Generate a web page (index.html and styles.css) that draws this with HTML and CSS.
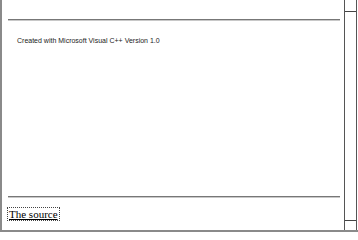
FILE: index.html
```html
<!DOCTYPE html>
<html>
<head>
<meta charset="utf-8">
<link rel="stylesheet" href="styles.css">
</head>
<body>
<div class="frame">
  <div class="page">
    <div class="top-space"></div>
    <hr class="rule">
    <p class="credit">Created with Microsoft Visual C++ Version 1.0</p>
    <div class="spacer"></div>
    <hr class="rule">
    <div class="links"><a class="source" href="#">The source</a></div>
  </div>
  <div class="scrollbar">
    <div class="sb-btn"></div>
    <div class="sb-track"></div>
    <div class="sb-btn sb-bottom"></div>
  </div>
</div>
</body>
</html>
```
FILE: styles.css
```css
html, body {
  margin: 0;
  padding: 0;
  background: #fff;
}
.frame {
  display: flex;
  width: 358px;
  height: 232px;
  box-sizing: border-box;
  border-left: 2px solid #8a8a8a;
  border-bottom: 2px solid #8a8a8a;
}
.page {
  flex: 1;
  display: flex;
  flex-direction: column;
  padding: 0 4px 0 6px;
}
.top-space {
  height: 19px;
}
.rule {
  margin: 0;
  border: 0;
  border-top: 1px solid #777;
  border-bottom: 1px solid #c8c8c8;
  height: 0;
}
.credit {
  margin: 16px 0 0 9px;
  font-family: "Liberation Sans", Arial, sans-serif;
  font-size: 7px;
  color: #222;
  line-height: 8px;
}
.spacer {
  flex: 1;
}
.links {
  padding: 9px 0 10px 0;
  line-height: 12px;
}
.source {
  font-family: "Liberation Serif", "Times New Roman", serif;
  font-size: 11px;
  color: #000;
  text-decoration: underline;
  outline: 1px dotted #444;
  padding: 0 1px;
}
.scrollbar {
  width: 13px;
  display: flex;
  flex-direction: column;
  border-left: 1px solid #555;
  border-right: 1px solid #555;
  box-sizing: border-box;
  margin-right: 1px;
}
.sb-btn {
  height: 11px;
  border-bottom: 1px solid #444;
}
.sb-track {
  flex: 1;
}
.sb-bottom {
  border-bottom: 0;
  border-top: 1px solid #444;
  height: 9px;
}
```
